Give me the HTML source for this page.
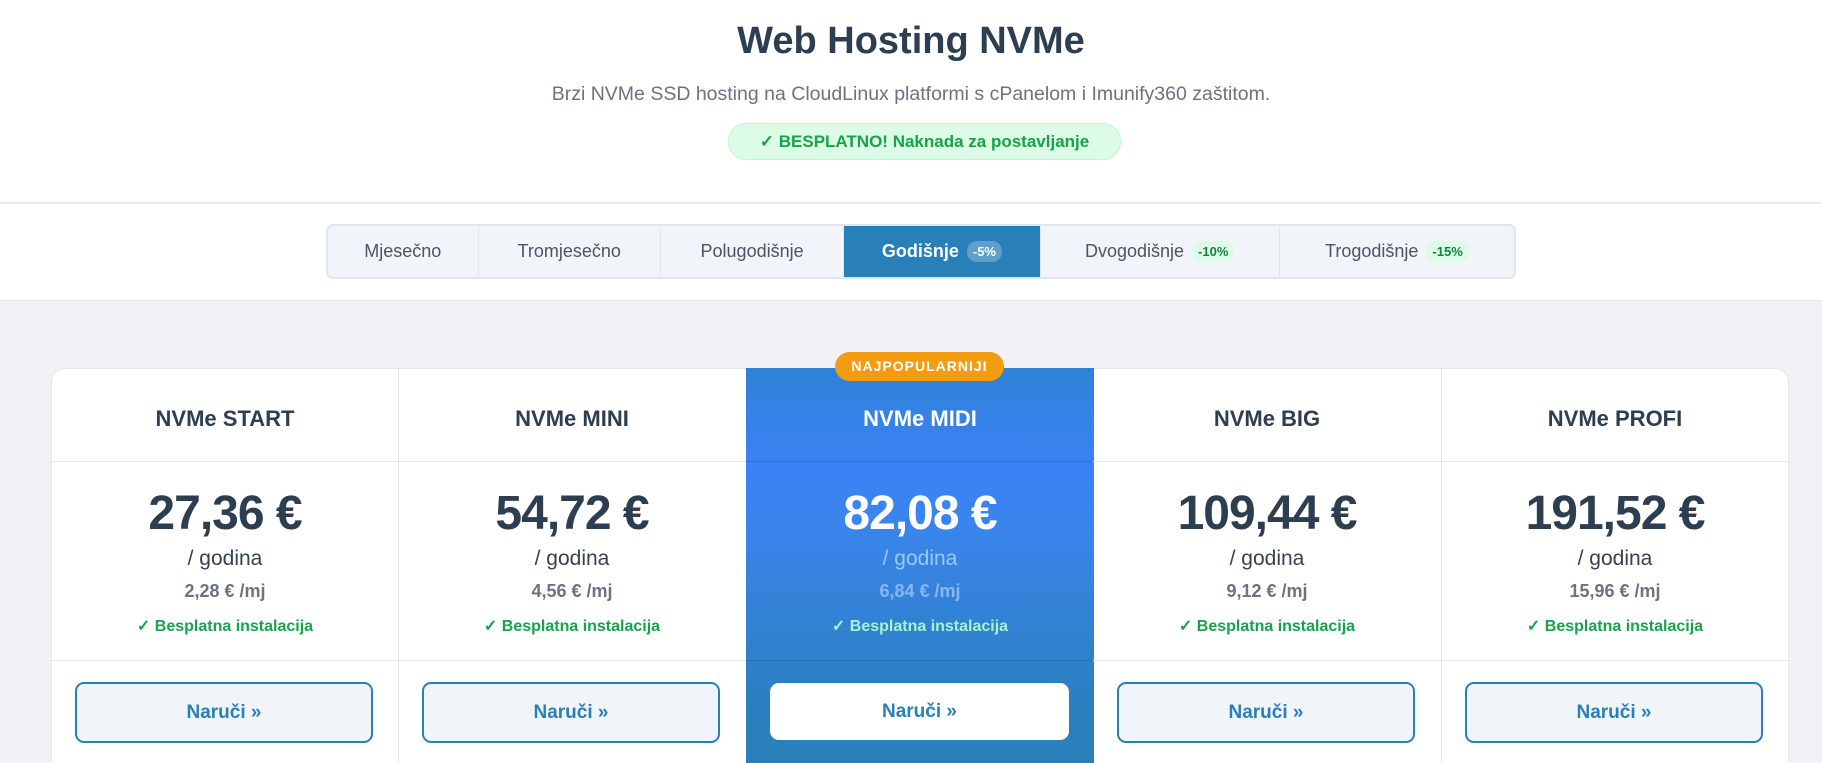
<!DOCTYPE html>
<html style="width:1822px;height:763px;overflow:hidden"><head><meta charset="utf-8"><style>
*{box-sizing:border-box;margin:0;padding:0}
body{width:1822px;height:763px;overflow:hidden;background:#f0f2f5;font-family:"Liberation Sans",sans-serif;color:#2c3e50;position:relative}
.top{position:absolute;left:0;top:0;width:1822px;height:203px;background:#fff;border-bottom:1px solid #e5e7eb}
h1{position:absolute;top:20px;width:100%;text-align:center;font-size:38px;font-weight:bold;color:#2c3e50}
.sub{position:absolute;top:83px;width:100%;text-align:center;font-size:19.5px;color:#6b7280}
.badge{position:absolute;left:728px;top:123px;width:393px;height:37px;background:#dcfce7;border:1px solid #bbf7d0;border-radius:18px;color:#16a34a;font-weight:bold;font-size:17px;text-align:center;line-height:35px}
.tabbar{position:absolute;left:0;top:204px;width:1822px;height:97px;background:#fff;border-bottom:1px solid #e5e7eb}
.tabs{position:absolute;left:326px;top:20px;width:1190px;height:55px;border:2px solid #e2e6ec;border-radius:7px;background:#f1f4f8;display:flex;overflow:hidden}
.tab{height:100%;border-right:1px solid #e2e6ec;display:flex;align-items:center;justify-content:center;font-size:18px;color:#4b5563}
.tab.a{background:#2980b9;color:#fff;font-weight:bold}
.pill{font-size:13px;font-weight:bold;border-radius:10px;padding:3px 6px;margin-left:8px}
.pa{background:rgba(255,255,255,.25);color:#fff}
.pg{background:#dcfce7;color:#15803d}
.card{position:absolute;left:51px;top:368px;width:1738px;height:395px;background:#fff;border-radius:14px 14px 0 0;border:1px solid #e5e7eb;border-bottom:none}
.col{position:absolute;top:368px;width:348px;height:395px;text-align:center}
.col .nm{position:absolute;top:38px;width:100%;font-size:22px;font-weight:bold}
.col .l1{position:absolute;top:93px;left:0;width:100%;border-top:1px solid #e5e7eb}
.col .l2{position:absolute;top:292px;left:0;width:100%;border-top:1px solid #e5e7eb}
.col .pr{position:absolute;top:118px;width:100%;font-size:48px;font-weight:bold;letter-spacing:-1px}
.col .go{position:absolute;top:179px;width:100%;font-size:21px;color:#374151}
.col .mj{position:absolute;top:213px;width:100%;font-size:18px;font-weight:bold;color:#6b7280}
.col .ch{position:absolute;top:248px;width:100%;font-size:16px;font-weight:bold;color:#16a34a}
.col .bt{position:absolute;top:314px;left:24px;width:298px;height:61px;border:2px solid #2980b9;border-radius:9px;background:#f1f4f8;color:#2980b9;font-weight:bold;font-size:19px;line-height:57px}
.vr{position:absolute;top:368px;width:1px;height:395px;background:#e5e7eb}
.mid{background:linear-gradient(180deg,#2f82d6 0%,#3b82f6 25%,#3a84ec 40%,#2a80bf 85%,#2980b9 100%);color:#fff}
.mid .l1,.mid .l2{border-top-color:rgba(0,0,0,.12)}
.mid .nm,.mid .pr{color:#fff}
.mid .go{color:#9cc8ff}
.mid .mj{color:#8ab6f0}
.mid .ch{color:#a7f3d0}
.mid .bt{background:#fff;border-color:#fff;top:315px;left:24px;width:299px;height:57px;line-height:53px;color:#2980b9}
.pop{position:absolute;left:835px;top:352px;width:169px;height:29px;background:#f39c12;border-radius:15px;color:#fff;font-weight:bold;font-size:14px;letter-spacing:1px;text-align:center;line-height:29px}
</style></head><body>
<div class="top">
<h1>Web Hosting NVMe</h1>
<div class="sub">Brzi NVMe SSD hosting na CloudLinux platformi s cPanelom i Imunify360 zaštitom.</div>
<div class="badge">✓ BESPLATNO! Naknada za postavljanje</div>
</div>
<div class="tabbar"><div class="tabs">
<div class="tab" style="width:151px">Mjesečno</div>
<div class="tab" style="width:183px">Tromjesečno</div>
<div class="tab" style="width:184px">Polugodišnje</div>
<div class="tab a" style="width:197px">Godišnje<span class="pill pa">-5%</span></div>
<div class="tab" style="width:240px">Dvogodišnje<span class="pill pg">-10%</span></div>
<div class="tab" style="width:235px;border-right:none">Trogodišnje<span class="pill pg">-15%</span></div>
</div></div>
<div class="card"></div>
<div class="vr" style="left:398px"></div><div class="vr" style="left:1093px"></div><div class="vr" style="left:1441px"></div>
<div class="col" style="left:51px"><div class="nm">NVMe START</div><div class="l1"></div><div class="pr">27,36 €</div><div class="go">/ godina</div><div class="mj">2,28 € /mj</div><div class="ch">✓ Besplatna instalacija</div><div class="l2"></div><div class="bt">Naruči »</div></div>
<div class="col" style="left:398px"><div class="nm">NVMe MINI</div><div class="l1"></div><div class="pr">54,72 €</div><div class="go">/ godina</div><div class="mj">4,56 € /mj</div><div class="ch">✓ Besplatna instalacija</div><div class="l2"></div><div class="bt">Naruči »</div></div>
<div class="col mid" style="left:746px"><div class="nm">NVMe MIDI</div><div class="l1"></div><div class="pr">82,08 €</div><div class="go">/ godina</div><div class="mj">6,84 € /mj</div><div class="ch">✓ Besplatna instalacija</div><div class="l2"></div><div class="bt">Naruči »</div></div>
<div class="col" style="left:1093px"><div class="nm">NVMe BIG</div><div class="l1"></div><div class="pr">109,44 €</div><div class="go">/ godina</div><div class="mj">9,12 € /mj</div><div class="ch">✓ Besplatna instalacija</div><div class="l2"></div><div class="bt">Naruči »</div></div>
<div class="col" style="left:1441px"><div class="nm">NVMe PROFI</div><div class="l1"></div><div class="pr">191,52 €</div><div class="go">/ godina</div><div class="mj">15,96 € /mj</div><div class="ch">✓ Besplatna instalacija</div><div class="l2"></div><div class="bt">Naruči »</div></div>
<div class="pop">NAJPOPULARNIJI</div>
</body></html>
